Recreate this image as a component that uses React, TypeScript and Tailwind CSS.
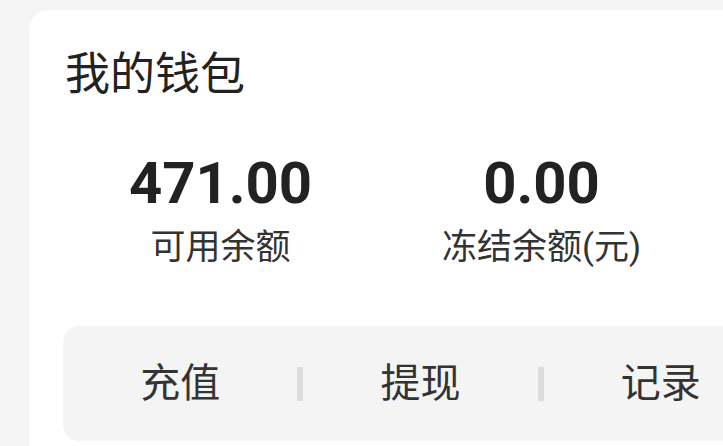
import React from "react";

const cjk = { fontFamily: 'Roboto, "Noto Sans CJK SC", "Noto Sans", sans-serif' };

function Stat({ value, label }: { value: string; label: string }) {
  return (
    <div className="flex w-[321px] flex-col items-center">
      <div className="text-[58px] font-bold leading-none text-[#222222]">{value}</div>
      <div className="mt-[18px] text-[35px] leading-none text-[#333333]">{label}</div>
    </div>
  );
}

function Divider() {
  return <div className="h-[34px] w-[6px] bg-[#dcdcdc]" />;
}

export default function App() {
  const actions = ["充值", "提现", "记录"];
  return (
    <div className="h-[446px] w-[723px] overflow-hidden bg-[#f5f5f5]" style={cjk}>
      <div className="ml-[29px] mt-[10px] w-[1000px] rounded-[20px] bg-white pb-[40px] pt-[42px]">
        <div className="pl-[36px] text-[45px] leading-none text-[#222222]">我的钱包</div>
        <div className="mt-[57px] flex pl-[31px]">
          <Stat value="471.00" label="可用余额" />
          <Stat value="0.00" label="冻结余额(元)" />
        </div>
        <div className="ml-[34px] mt-[61px] flex h-[115px] w-[715px] items-center rounded-[16px] bg-[#f4f4f4]">
          {actions.map((a, i) => (
            <React.Fragment key={a}>
              {i > 0 && <Divider />}
              <div className="flex-1 text-center text-[40px] leading-none text-[#333333]">{a}</div>
            </React.Fragment>
          ))}
        </div>
      </div>
    </div>
  );
}
